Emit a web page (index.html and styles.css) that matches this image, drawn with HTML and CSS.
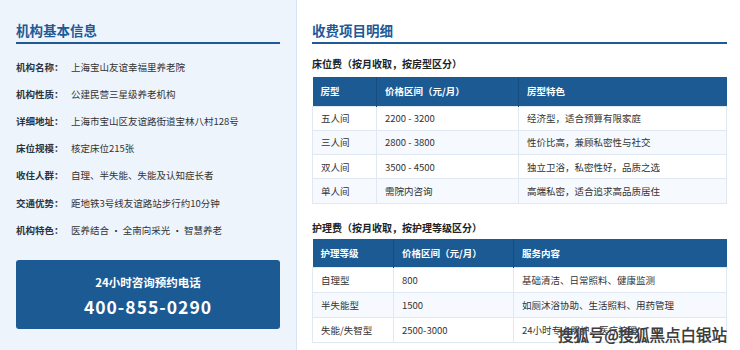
FILE: index.html
```html
<!DOCTYPE html>
<html lang="zh-CN">
<head>
<meta charset="utf-8">
<title>机构信息</title>
<link rel="stylesheet" href="styles.css">
</head>
<body>
<div class="page">
  <aside class="left">
    <h2 class="title">机构基本信息</h2>
    <dl class="info">
      <dt>机构名称：</dt><dd>上海宝山友谊幸福里养老院</dd>
      <dt>机构性质：</dt><dd>公建民营三星级养老机构</dd>
      <dt>详细地址：</dt><dd>上海市宝山区友谊路街道宝林八村128号</dd>
      <dt>床位规模：</dt><dd>核定床位215张</dd>
      <dt>收住人群：</dt><dd>自理、半失能、失能及认知症长者</dd>
      <dt>交通优势：</dt><dd>距地铁3号线友谊路站步行约10分钟</dd>
      <dt>机构特色：</dt><dd>医养结合 · 全南向采光 · 智慧养老</dd>
    </dl>
    <div class="hotline">
      <div class="hotline-label">24小时咨询预约电话</div>
      <div class="hotline-number">400-855-0290</div>
    </div>
  </aside>
  <main class="right">
    <h2 class="title">收费项目明细</h2>
    <h3 class="sub sub-first">床位费（按月收取，按房型区分）</h3>
    <table class="fee bed">
      <colgroup><col class="b1"><col class="b2"><col class="b3"></colgroup>
      <thead><tr><th>房型</th><th>价格区间（元/月）</th><th>房型特色</th></tr></thead>
      <tbody>
        <tr><td>五人间</td><td>2200 - 3200</td><td>经济型，适合预算有限家庭</td></tr>
        <tr><td>三人间</td><td>2800 - 3800</td><td>性价比高，兼顾私密性与社交</td></tr>
        <tr><td>双人间</td><td>3500 - 4500</td><td>独立卫浴，私密性好，品质之选</td></tr>
        <tr><td>单人间</td><td>需院内咨询</td><td>高端私密，适合追求高品质居住</td></tr>
      </tbody>
    </table>
    <h3 class="sub sub-second">护理费（按月收取，按护理等级区分）</h3>
    <table class="fee care">
      <colgroup><col class="c1"><col class="c2"><col class="c3"></colgroup>
      <thead><tr><th>护理等级</th><th>价格区间（元/月）</th><th>服务内容</th></tr></thead>
      <tbody>
        <tr><td>自理型</td><td>800</td><td>基础清洁、日常照料、健康监测</td></tr>
        <tr><td>半失能型</td><td>1500</td><td>如厕沐浴协助、生活照料、用药管理</td></tr>
        <tr><td>失能/失智型</td><td>2500-3000</td><td>24小时专人照护、医疗护理</td></tr>
      </tbody>
    </table>
  </main>
  <div class="watermark">搜狐号@搜狐黑点白银站</div>
</div>
</body>
</html>
```
FILE: styles.css
```css
* { box-sizing: border-box; }
html, body { margin: 0; padding: 0; }
body {
  font-family: "Noto Sans CJK SC", "Noto Sans", "Liberation Sans", sans-serif;
  color: #333;
  background: #fff;
}
.page {
  position: relative;
  display: flex;
  width: 740px;
  height: 350px;
  overflow: hidden;
}
.left {
  width: 297px;
  flex: none;
  background: #eef4fc;
  border-right: 1px solid #d7e4f3;
  padding: 20px 16px 0 16px;
}
.right {
  flex: 1;
  padding: 20px 14px 0 15px;
}
.title {
  margin: 0;
  font-size: 13.5px;
  line-height: 20px;
  font-weight: 700;
  color: #1d5a96;
  padding-bottom: 2px;
  border-bottom: 2px solid #1d5a96;
}
.info {
  margin: 9.5px 0 0 0;
  display: grid;
  grid-template-columns: 55px 1fr;
  grid-auto-rows: 27.1px;
  align-items: center;
  font-size: 9.5px;
}
.info dt {
  font-weight: 700;
  color: #2b3440;
}
.info dd {
  margin: 0;
  color: #333;
}
.hotline {
  margin-top: 17px;
  height: 69px;
  background: #1c5a94;
  border-radius: 3px;
  color: #fff;
  text-align: center;
  padding-top: 12px;
}
.hotline-label {
  font-size: 11.5px;
  line-height: 20px;
  font-weight: 700;
}
.hotline-number {
  margin-top: 3px;
  font-size: 17.5px;
  line-height: 24px;
  font-weight: 700;
  letter-spacing: 1px;
}
.sub {
  margin: 0;
  font-size: 10px;
  line-height: 16px;
  font-weight: 700;
  color: #222;
}
.sub-first { margin-top: 12px; margin-bottom: 5px; }
.sub-second { margin-top: 16px; margin-bottom: 3px; }
.fee {
  width: 414px;
  border-collapse: collapse;
  table-layout: fixed;
  font-size: 9.5px;
}
.b1 { width: 64px; }
.b2 { width: 142px; }
.b3 { width: 208px; }
.c1 { width: 81px; }
.c2 { width: 120px; }
.c3 { width: 213px; }
.fee th {
  background: #1c5a94;
  color: #fff;
  font-weight: 700;
  text-align: left;
  height: 29px;
  padding: 0 8px;
  border-left: 1px solid #174c80;
}
.fee th:first-child { border-left: none; }
.fee td {
  padding: 0 8px;
  border: 1px solid #dfe8f3;
  color: #333;
  white-space: nowrap;
}
.bed td { height: 24.3px; }
.care td { height: 25px; }
.fee tbody tr:nth-child(even) td { background: #f6f9fd; }
.watermark {
  position: absolute;
  right: 13px;
  bottom: 6px;
  font-size: 15.5px;
  line-height: 20px;
  font-weight: 300;
  color: #fff;
  -webkit-text-stroke: 0.8px #3c3c3c;
  text-shadow: 0 0 1px rgba(255,255,255,0.8);
}
```
